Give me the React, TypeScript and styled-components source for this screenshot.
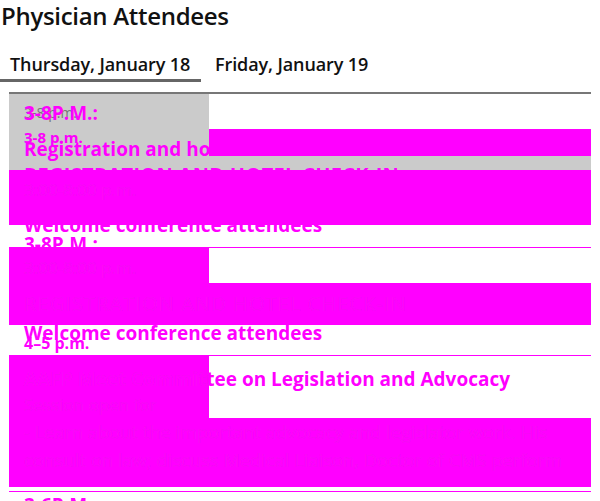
import React from 'react';
import styled, { createGlobalStyle } from 'styled-components';

const MAGENTA = '#ff00ff';
const GREY = '#cbcbcb';
const FRINGE = 'text-shadow: 0 0 0 rgba(110, 130, 110, 0.3);';

const GlobalStyle = createGlobalStyle`
  html, body { margin: 0; padding: 0; background: #fff; }
  body { font-family: 'Open Sans', 'Noto Sans', sans-serif; color: #111; }
`;

const Page = styled.div`
  width: 600px;
  height: 501px;
  overflow: hidden;
`;

const Title = styled.h1`
  margin: 0;
  padding-left: 1px;
  font-size: 24px;
  line-height: 32px;
  font-weight: 600;
  letter-spacing: -0.3px;
`;

const Tabs = styled.div`
  display: flex;
  margin-top: 16px;
  height: 34px;
`;

const Tab = styled.div<{ $active?: boolean }>`
  box-sizing: border-box;
  width: ${p => (p.$active ? '201px' : 'auto')};
  padding-left: ${p => (p.$active ? '10px' : '14px')};
  font-size: 18px;
  line-height: 32px;
  font-weight: 600;
  letter-spacing: -0.1px;
  border-bottom: ${p => (p.$active ? '3px solid #666' : 'none')};
`;

const Schedule = styled.div`
  width: 582px;
  margin: 10px 9px 0;
  border-top: 2px solid #777;
`;

/* bands and copy share one grid cell, the copy is printed over the bands */
const Session = styled.div<{ $height: number; $open?: boolean }>`
  display: grid;
  height: ${p => p.$height}px;
  border-bottom: ${p => (p.$open ? 'none' : `1px solid ${MAGENTA}`)};
`;

const Bands = styled.div`
  grid-area: 1 / 1;
  display: flex;
  flex-direction: column;
`;

const BandRow = styled.div<{ $height: number }>`
  display: flex;
  flex: none;
  height: ${p => p.$height}px;
`;

const Band = styled.div<{ $color?: string; $wide?: boolean }>`
  flex: ${p => (p.$wide ? '1' : '0 0 200px')};
  background: ${p => p.$color ?? 'transparent'};
`;

const Copy = styled.div`
  grid-area: 1 / 1;
  display: flex;
  flex-direction: column;
  padding-left: 15px;
`;

/* zero-height line: the gap is the distance between two text centres */
const Line = styled.div<{ $gap: number; $size: number; $bold?: boolean; $faint?: boolean; $track?: number; $color?: string }>`
  height: 0;
  margin-top: ${p => p.$gap}px;
  line-height: 0;
  white-space: nowrap;
  font-size: ${p => p.$size}px;
  font-weight: ${p => (p.$bold ? 700 : 400)};
  letter-spacing: ${p => p.$track ?? 0}px;
  color: ${p => p.$color ?? MAGENTA};
  ${p => (p.$faint ? FRINGE : '')}
`;

const Overprint = styled.span`
  ${FRINGE}
`;

function App() {
  return (
    <Page>
      <GlobalStyle />
      <Title>Physician Attendees</Title>
      <Tabs>
        <Tab $active>Thursday, January 18</Tab>
        <Tab>Friday, January 19</Tab>
      </Tabs>
      <Schedule>
        <Session $height={153}>
          <Bands>
            <BandRow $height={35}><Band $color={GREY} /></BandRow>
            <BandRow $height={27}><Band $color={GREY} /><Band $wide $color={MAGENTA} /></BandRow>
            <BandRow $height={14}><Band $wide $color={GREY} /></BandRow>
            <BandRow $height={55}><Band $wide $color={MAGENTA} /></BandRow>
          </Bands>
          <Copy>
            <Line $gap={19} $size={14} $color="#777">3-8 p.m.</Line>
            <Line $gap={0} $size={19} $bold>3-8P.M.:</Line>
            <Line $gap={24} $size={15} $bold $faint>3-8 p.m.</Line>
            <Line $gap={12} $size={19} $bold>Registration and hotel check-in</Line>
            <Line $gap={26} $size={20} $bold $track={0.3}>REGISTRATION AND HOTEL CHECK-IN</Line>
            <Line $gap={15} $size={17} $faint>3:00-8:00 p.m.</Line>
            <Line $gap={35} $size={19} $bold>Welcome conference attendees</Line>
            <Line $gap={19} $size={19} $bold>3-8P.M.:</Line>
          </Copy>
        </Session>
        <Session $height={107}>
          <Bands>
            <BandRow $height={35}><Band $color={MAGENTA} /></BandRow>
            <BandRow $height={42}><Band $wide $color={MAGENTA} /></BandRow>
          </Bands>
          <Copy>
            <Line $gap={20} $size={17} $faint>3:00-8:00 p.m.</Line>
            <Line $gap={36} $size={20} $faint $track={1.1}>REGISTRATION AND HOTEL CHECK-IN</Line>
            <Line $gap={29} $size={19} $bold>Welcome conference attendees</Line>
            <Line $gap={10} $size={16} $bold>4–5 p.m.</Line>
          </Copy>
        </Session>
        <Session $height={135}>
          <Bands>
            <BandRow $height={62}><Band $color={MAGENTA} /></BandRow>
            <BandRow $height={69}><Band $wide $color={MAGENTA} /></BandRow>
          </Bands>
          <Copy>
            <Line $gap={23} $size={19} $bold>
              <Overprint>AAFP Meet Committ</Overprint>ee on Legislation and Advocacy
            </Line>
            <Line $gap={26} $size={17} $faint>Session open for</Line>
            <Line $gap={27} $size={18} $faint $track={0.13}>- Learn about the important advocacy and legislator work. His</Line>
            <Line $gap={28} $size={18} $faint $track={0.15}>consult on law; discuss Medical Liaison, Doctor of CMS perform</Line>
          </Copy>
        </Session>
        <Session $height={9} $open>
          <Copy>
            <Line $gap={13} $size={19} $bold>3-6P.M.:</Line>
          </Copy>
        </Session>
      </Schedule>
    </Page>
  );
}

export default App;
